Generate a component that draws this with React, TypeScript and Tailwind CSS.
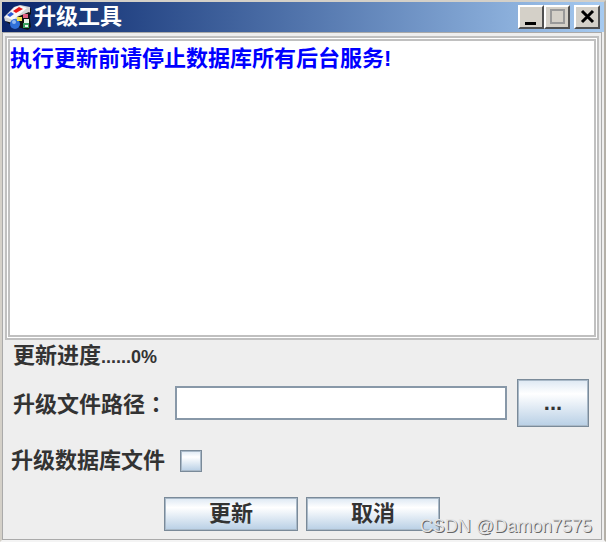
import React from "react";

const face =
  "border border-[#7a8a99] bg-linear-to-b from-[#dde8f3] via-white via-30% to-[#b8cfe5] shadow-[inset_0_0_0_1px_#a9b9c8]";
const cap =
  "flex h-6 w-[26px] items-center justify-center border-2 border-t-white border-l-white border-r-[#505050] border-b-[#505050] bg-[#d4d0c8]";

function AppIcon() {
  return (
    <svg viewBox="0 0 28 28" className="size-7 shrink-0">
      <path d="M1 18 L9 23 L15 22 L27 11 L27 5 L20 10Z" fill="#111" />
      <path d="M0 14 L10 4 L16 2 L26 4 L26 9 L16 17 L9 20 L1 18Z" fill="#d4d4d4" />
      <path d="M1 14 L11 4 L17 3 L23 5 L9 17Z" fill="#f8f8f8" />
      <path d="M3 12 L7 9 L10 11 L6 14Z" fill="#2858d8" />
      <path d="M9 8 L15 4 L19 6 L12 10Z" fill="#e81818" />
      <path d="M13 14 L25 9 L27 24 L24 27 L14 24Z" fill="#111" />
      <circle cx="11" cy="21" r="5" fill="#2f6fd8" />
      <circle cx="10" cy="19" r="2" fill="#8fb8f0" />
      <path d="M13 14h5v4h-5z" fill="#f0e050" />
      <path d="M19 11h5v4h-5z" fill="#e06080" />
      <path d="M20 16h5v4h-5z" fill="#e8f4e8" />
      <path d="M19 20h6v5h-6z" fill="#38a060" />
      <path d="M21 22h3v2h-3z" fill="#f2f2f2" />
    </svg>
  );
}

export default function App() {
  return (
    <main className="relative flex min-h-screen flex-col border-2 border-t-[#d4d0c8] border-r-[#b4b0a8] border-b-[#f4f4f4] border-l-[#d4d0c8] bg-[#eeeeee] font-['Liberation_Sans','Noto_Sans_CJK_SC',sans-serif] text-[22px] leading-8 font-bold text-[#333333]">
      <header className="flex h-[30px] items-center bg-linear-to-r from-[#0a246a] to-[#a6caf0] pr-1 pl-0.5 text-white">
        <AppIcon />
        <h1 className="ml-0.5 flex-1">升级工具</h1>
        <button aria-label="最小化" className={cap}>
          <svg viewBox="0 0 20 20" className="size-5"><path d="M4 15h11v3H4z" fill="#000" /></svg>
        </button>
        <button aria-label="最大化" className={cap}>
          <svg viewBox="0 0 20 20" className="size-5"><path d="M4 3h13v13H4z" fill="none" stroke="#999" strokeWidth="2" /></svg>
        </button>
        <button aria-label="关闭" className={`${cap} ml-1`}>
          <svg viewBox="0 0 20 20" className="size-5"><path d="M5 4l11 11M16 4L5 15" stroke="#000" strokeWidth="3" /></svg>
        </button>
      </header>
      <div className="mr-0.5 flex flex-1 flex-col border border-[#aaa]">
        <div className="mt-[3px] mr-0.5 ml-0.5 flex h-[304px] border-2 border-[#c0c0c0] bg-white p-px">
          <textarea
            aria-label="升级日志"
            readOnly
            defaultValue="执行更新前请停止数据库所有后台服务!"
            className="w-full resize-none border-2 border-[#c0c0c0] bg-white pt-0.5 text-[#0000ff] outline-none"
          />
        </div>
        <p className="pl-2.5">更新进度<span className="text-[18px]">......0%</span></p>
        <div className="mt-1.5 flex items-center pr-3 pl-2.5">
          <label htmlFor="path" className="w-[162px]">升级文件路径<span className="font-['Noto_Sans_CJK_TC',sans-serif]" lang="zh-TW">：</span></label>
          <input id="path" className="h-[34px] min-w-0 flex-1 border-2 border-[#8898a8] bg-white px-1" />
          <button className={`${face} ml-2.5 h-12 w-[72px]`}>...</button>
        </div>
        <div className="mt-[18px] flex items-center pl-2">
          <label htmlFor="database" className="w-[169px]">升级数据库文件</label>
          <input id="database" type="checkbox" className={`${face} size-[22px] appearance-none`} />
        </div>
        <div className="mt-5 flex justify-center gap-2">
          <button className={`${face} h-[34px] w-[134px]`}>更新</button>
          <button className={`${face} h-[34px] w-[134px]`}>取消</button>
        </div>
      </div>
      <div className="absolute right-3 bottom-0 text-[18px] leading-7 font-normal text-[#e4e4e4] [text-shadow:1px_1px_0_#666]">CSDN @Damon7575</div>
    </main>
  );
}
